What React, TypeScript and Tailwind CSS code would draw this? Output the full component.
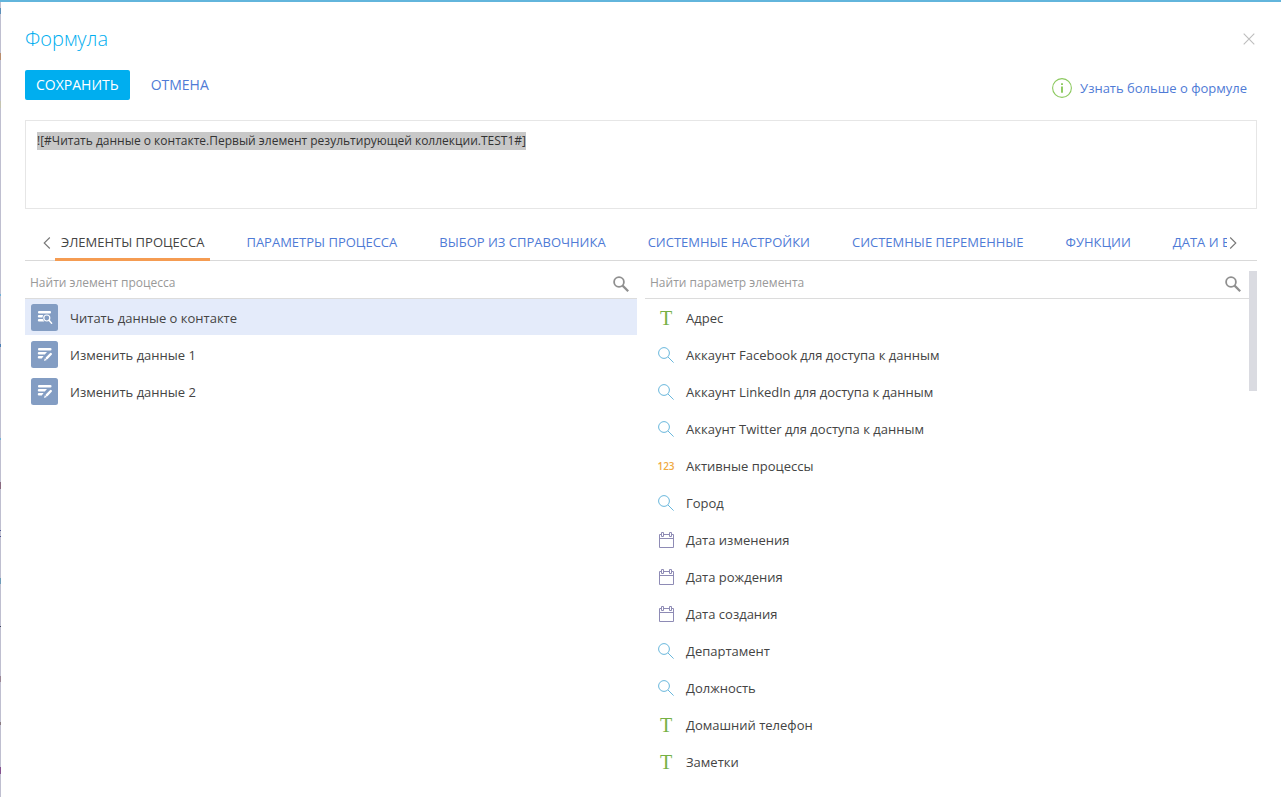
// src/pages/FormulaDialog.tsx
//
// Formula editor dialog: expression box on top, then process elements on the
// left and the parameters of the selected element on the right.

import React, { useEffect, useRef, useState } from 'react';
import { clsx } from 'clsx';

type ParameterType = 'text' | 'lookup' | 'number' | 'date';

interface ProcessElement {
  id: string;
  title: string;
  kind: 'read' | 'edit';
}

interface ElementParameter {
  title: string;
  type: ParameterType;
}

const TABS = [
  'Элементы процесса',
  'Параметры процесса',
  'Выбор из справочника',
  'Системные настройки',
  'Системные переменные',
  'Функции',
  'Дата и время',
];

const ELEMENTS: ProcessElement[] = [
  { id: 'read-contact', title: 'Читать данные о контакте', kind: 'read' },
  { id: 'edit-1', title: 'Изменить данные 1', kind: 'edit' },
  { id: 'edit-2', title: 'Изменить данные 2', kind: 'edit' },
];

const PARAMETERS: ElementParameter[] = [
  { title: 'Адрес', type: 'text' },
  { title: 'Аккаунт Facebook для доступа к данным', type: 'lookup' },
  { title: 'Аккаунт LinkedIn для доступа к данным', type: 'lookup' },
  { title: 'Аккаунт Twitter для доступа к данным', type: 'lookup' },
  { title: 'Активные процессы', type: 'number' },
  { title: 'Город', type: 'lookup' },
  { title: 'Дата изменения', type: 'date' },
  { title: 'Дата рождения', type: 'date' },
  { title: 'Дата создания', type: 'date' },
  { title: 'Департамент', type: 'lookup' },
  { title: 'Должность', type: 'lookup' },
  { title: 'Домашний телефон', type: 'text' },
  { title: 'Заметки', type: 'text' },
];

// Slivers of the page under the dialog that show along its left edge.
const EDGE_MARKS = [
  { y: 8, height: 6, color: '#5c8fb8' },
  { y: 53, height: 7, color: '#b98d6d' },
  { y: 101, height: 7, color: '#c4c4b0' },
  { y: 294, height: 2, color: '#6fb1d8' },
  { y: 344, height: 3, color: '#4a7fb5' },
  { y: 438, height: 2, color: '#6fb1d8' },
  { y: 482, height: 7, color: '#8a6a80' },
  { y: 530, height: 1, color: '#4a5590' },
  { y: 536, height: 1, color: '#4a5590' },
  { y: 578, height: 6, color: '#6d9cb8' },
  { y: 626, height: 1, color: '#3c4460' },
  { y: 676, height: 6, color: '#9a8595' },
  { y: 722, height: 3, color: '#8a7a80' },
  { y: 767, height: 7, color: '#84508f' },
];

function ElementIcon({ kind }: { kind: ProcessElement['kind'] }) {
  return (
    <svg viewBox="0 0 27 27" className="size-[27px] shrink-0" aria-hidden="true">
      <rect width="27" height="27" rx="2.5" fill="#839dc3" />
      {kind === 'read' ? (
        <>
          <g fill="#fff">
            <rect x="7" y="7" width="13" height="2.6" rx="1" />
            <path d="M8 11h4.2a5 5 0 0 0-.7 2.4H8a1.2 1.2 0 0 1 0-2.4zM8 15h3.8a5 5 0 0 0 1.6 2.4H8A1.2 1.2 0 0 1 8 15z" />
          </g>
          <circle cx="15.8" cy="14" r="3" fill="none" stroke="#fff" strokeWidth="1.2" />
          <path d="M18 16.3l2.6 2.9" stroke="#fff" strokeWidth="1.5" strokeLinecap="round" />
        </>
      ) : (
        <>
          <g fill="#fff">
            <rect x="7" y="7" width="13.5" height="2.6" rx="1" />
            <path d="M8 11h8l-2.2 2.5H8A1.2 1.2 0 0 1 8 11zM8 15h4.6l-1.8 2.5H8A1.2 1.2 0 0 1 8 15z" />
          </g>
          <path d="M19.8 13l-4 4.2" stroke="#fff" strokeWidth="2.4" strokeLinecap="round" />
          <path d="M13.8 17.2l2 1.8-2.8 1z" fill="#fff" />
        </>
      )}
    </svg>
  );
}

function ParameterIcon({ type }: { type: ParameterType }) {
  if (type === 'text') {
    return <span className="font-['Liberation_Serif',serif] text-[20px] leading-5 text-[#76b144]">T</span>;
  }
  if (type === 'number') {
    return <span className="text-[10px] leading-5 font-semibold text-[#efa93f]">123</span>;
  }
  if (type === 'date') {
    return (
      <svg viewBox="0 0 16 16" className="size-4" fill="none" stroke="#8e8bb5" aria-hidden="true">
        <path d="M3.5 2.5h-2v13h14v-13h-2M5.5 2.5h6M1.5 6.5h14" />
        <path d="M3.5.5h2v4h-2zM11.5.5h2v4h-2z" />
      </svg>
    );
  }
  return (
    <svg viewBox="0 0 16 16" className="size-4" fill="none" stroke="#69b7dc" aria-hidden="true">
      <circle cx="6" cy="6" r="5.4" />
      <path d="M10 10l5.6 5.6" />
    </svg>
  );
}

function SearchBox({ label }: { label: string }) {
  return (
    <div className="flex h-7 items-center border-b border-[#dcdcdc] pr-2 pb-0.5 pl-[5px]">
      <input
        type="text"
        aria-label={label}
        placeholder={label}
        className="min-w-0 flex-1 bg-transparent pb-0.5 text-[12px] leading-5 text-[#444] placeholder:text-[#999] focus:outline-none"
      />
      <svg viewBox="0 0 16 16" className="size-4 shrink-0" fill="none" stroke="#8f8f8f" aria-hidden="true">
        <circle cx="6" cy="6" r="4.9" strokeWidth="1.8" />
        <path d="M9.6 9.6l5.6 5.6" strokeWidth="2.2" />
      </svg>
    </div>
  );
}

function TabArrow({ direction }: { direction: 'left' | 'right' }) {
  return (
    <button
      type="button"
      aria-label={direction === 'left' ? 'Назад' : 'Вперёд'}
      className={clsx('flex w-[30px] shrink-0 items-center', direction === 'left' ? 'justify-end pr-1' : 'pl-0.5')}
    >
      <svg viewBox="0 0 8 12" className="h-3 w-2" fill="none" stroke="#777" strokeWidth="1.1" aria-hidden="true">
        <path d={direction === 'left' ? 'M6.8.5L1.2 6l5.6 5.5' : 'M1.2.5L6.8 6l-5.6 5.5'} />
      </svg>
    </button>
  );
}

export default function App() {
  const [activeTab, setActiveTab] = useState(0);
  const [selectedId, setSelectedId] = useState(ELEMENTS[0].id);
  const [formula, setFormula] = useState(
    '![#Читать данные о контакте.Первый элемент результирующей коллекции.TEST1#]',
  );
  const formulaRef = useRef<HTMLTextAreaElement>(null);

  // The whole expression is selected when the dialog opens
  useEffect(() => {
    formulaRef.current?.focus();
    formulaRef.current?.select();
  }, []);

  return (
    <div className="relative flex h-screen flex-col overflow-hidden border-t-2 border-[#62b5dc] bg-white pr-6 pl-[25px] font-['Open_Sans',sans-serif] text-[13px] text-[#444]">
      <svg className="absolute -top-0.5 left-0 h-screen w-px bg-[#bfbfd0]" aria-hidden="true">
        {EDGE_MARKS.map((mark) => (
          <rect key={mark.y} y={mark.y} width="1" height={mark.height} fill={mark.color} />
        ))}
      </svg>

      {/* Title */}
      <header className="flex items-center justify-between pt-[23px]">
        <h1 className="text-[20px] leading-7 font-light text-[#00aeef]">Формула</h1>
        <button type="button" aria-label="Закрыть" className="p-0.5">
          <svg viewBox="0 0 12 12" className="size-3" stroke="#bdbdbd" strokeWidth="1.1" aria-hidden="true">
            <path d="M.7.7l10.6 10.6M11.3.7L.7 11.3" />
          </svg>
        </button>
      </header>

      {/* Actions */}
      <div className="flex items-center pt-[17px] pr-2.5">
        <button
          type="button"
          className="h-[30px] rounded-xs bg-[#00aeef] px-[11px] pb-0.5 text-[14px] font-medium text-white uppercase"
        >
          Сохранить
        </button>
        <button type="button" className="ml-[21px] h-[30px] pb-0.5 text-[14px] text-[#4f7bd6] uppercase">
          Отмена
        </button>
        <a href="#help" className="mt-1.5 ml-auto flex items-center gap-2 text-[#4f7bd6]">
          <svg viewBox="0 0 20 20" className="size-5" fill="none" aria-hidden="true">
            <circle cx="10" cy="10" r="9.4" stroke="#8cc95f" strokeWidth="1.1" />
            <path d="M10 8.4v6.4M10 5.2v1.8" stroke="#8cc95f" strokeWidth="1.9" />
          </svg>
          <span className="pt-0.5">Узнать больше о формуле</span>
        </a>
      </div>

      <textarea
        ref={formulaRef}
        aria-label="Формула"
        value={formula}
        onChange={(e) => setFormula(e.target.value)}
        spellCheck={false}
        className="mt-5 block h-[89px] w-full shrink-0 resize-none border border-[#e6e6e6] p-[11px] text-[12px] leading-[18px] text-[#333] selection:bg-[#c8c8c8] selection:text-[#333] focus:outline-none"
      />

      {/* Tabs */}
      <div className="mt-4 flex h-9 shrink-0 border-b border-[#d9d9d9]">
        <TabArrow direction="left" />
        <div role="tablist" className="-mb-px flex min-w-0 flex-1 gap-[30px] overflow-hidden">
          {TABS.map((tab, index) => (
            <button
              key={tab}
              type="button"
              role="tab"
              aria-selected={index === activeTab}
              onClick={() => setActiveTab(index)}
              className={clsx(
                'shrink-0 border-b-3 px-1.5 pt-0.5 whitespace-nowrap uppercase',
                index === activeTab ? 'border-[#f59c52] text-[#444]' : 'border-transparent text-[#4f7bd6]',
              )}
            >
              {tab}
            </button>
          ))}
        </div>
        <TabArrow direction="right" />
      </div>

      <div className="flex min-h-0 flex-1 gap-2 pt-2.5">
        {/* Process elements */}
        <section className="min-w-0 flex-1">
          <SearchBox label="Найти элемент процесса" />
          <ul className="flex flex-col gap-px">
            {ELEMENTS.map((element) => (
              <li key={element.id}>
                <button
                  type="button"
                  onClick={() => setSelectedId(element.id)}
                  className={clsx(
                    'flex h-9 w-full items-center gap-3 pl-1.5 text-left',
                    element.id === selectedId && 'bg-[#e4ebfa]',
                  )}
                >
                  <ElementIcon kind={element.kind} />
                  <span className="pt-1">{element.title}</span>
                </button>
              </li>
            ))}
          </ul>
        </section>

        {/* Parameters of the selected element */}
        <section className="flex min-w-0 flex-1">
          <div className="min-w-0 flex-1 overflow-hidden">
            <SearchBox label="Найти параметр элемента" />
            <ul className="flex flex-col gap-px">
              {PARAMETERS.map((parameter) => (
                <li key={parameter.title}>
                  <button type="button" className="flex h-9 w-full items-center gap-3 pl-[13px] text-left">
                    <span className="flex w-4 shrink-0 justify-center pt-0.5">
                      <ParameterIcon type={parameter.type} />
                    </span>
                    <span className="pt-1">{parameter.title}</span>
                  </button>
                </li>
              ))}
            </ul>
          </div>
          <div className="h-[120px] w-2 shrink-0 bg-[#dadbe1]" />
        </section>
      </div>
    </div>
  );
}
